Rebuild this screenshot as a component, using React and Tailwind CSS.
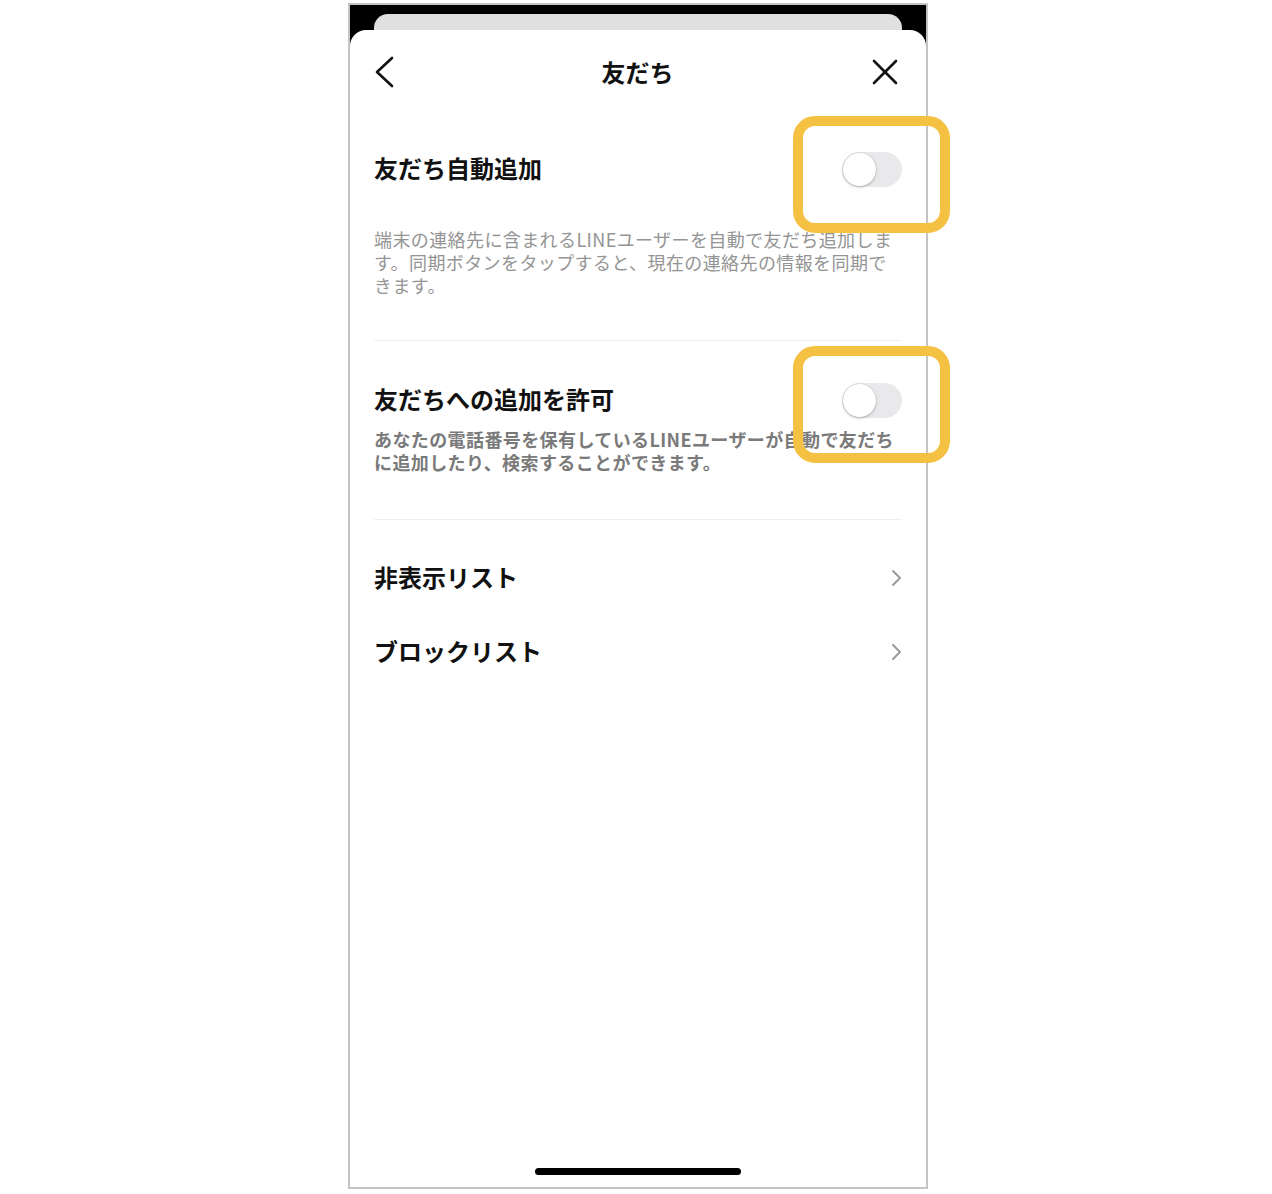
import React from "react";

function Toggle({ boxTop }) {
  return (
    <div className="relative w-[60px] h-[35px] shrink-0">
      <div className="w-[60px] h-[35px] rounded-full bg-[#e9e9eb] flex items-center pl-[1px]">
        <div className="w-[33px] h-[33px] rounded-full bg-white shadow-[0_1px_3px_rgba(0,0,0,0.25),0_0_0_0.5px_rgba(0,0,0,0.06)]" />
      </div>
      <div
        className={
          "absolute left-[-49px] w-[157px] h-[117px] rounded-[22px] border-[10px] border-[#f5c143] z-10 pointer-events-none " +
          (boxTop === 1 ? "top-[-36px]" : "top-[-37px]")
        }
      />
    </div>
  );
}

function Chevron() {
  return (
    <svg width="12" height="20" viewBox="0 0 12 20" className="shrink-0">
      <polyline points="3,3 10,10 3,17" fill="none" stroke="#9a9a9a" strokeWidth="2" strokeLinecap="round" strokeLinejoin="round" />
    </svg>
  );
}

export default function App() {
  return (
    <div className="w-[1272px] h-[1194px] bg-white pl-[348px] pt-[3px] font-['Noto_Sans_CJK_JP','Noto_Sans',sans-serif]">
      <div className="w-[580px] h-[1186px] border-2 border-[#c4c4c4] bg-black flex flex-col">
        <div className="h-[25px] shrink-0 pt-[9px] px-[24px]">
          <div className="h-[16px] rounded-t-[14px] bg-[#e0e0e0]" />
        </div>
        <div className="flex-1 bg-white rounded-t-[16px] flex flex-col">
          {/* header */}
          <div className="h-[84px] grid grid-cols-[1fr_auto_1fr] items-center pl-[24px] pr-[28px]">
            <div className="flex justify-start">
              <svg width="22" height="32" viewBox="0 0 22 32">
                <polyline points="18,2 3,16 18,30" fill="none" stroke="#111" strokeWidth="2.6" strokeLinecap="round" strokeLinejoin="round" />
              </svg>
            </div>
            <div className="text-[24px] font-bold text-[#111] leading-none ml-[3px]">友だち</div>
            <div className="flex justify-end">
              <svg width="26" height="26" viewBox="0 0 26 26">
                <line x1="2" y1="2" x2="24" y2="24" stroke="#111" strokeWidth="2.6" strokeLinecap="round" />
                <line x1="24" y1="2" x2="2" y2="24" stroke="#111" strokeWidth="2.6" strokeLinecap="round" />
              </svg>
            </div>
          </div>

          <div className="px-[24px] flex flex-col">
            {/* section 1 */}
            <div className="mt-[1px] h-[106px] flex items-center justify-between">
              <div className="text-[24px] font-bold text-[#111] leading-none">友だち自動追加</div>
              <div className="mt-[2px]">
                <Toggle boxTop={1} />
              </div>
            </div>
            <p className="mt-[7px] text-[18px] leading-[23px] tracking-[0.4px] text-[#949494]">
              端末の連絡先に含まれるLINEユーザーを自動で友だち追加します。同期ボタンをタップすると、現在の連絡先の情報を同期できます。
            </p>
            <div className="mt-[43px] h-px bg-[#efefef]" />

            {/* section 2 */}
            <div className="mt-[40px] h-[36px] flex items-center justify-between">
              <div className="text-[24px] font-bold text-[#111] leading-none">友だちへの追加を許可</div>
              <div className="mt-[2px]">
                <Toggle boxTop={2} />
              </div>
            </div>
            <p className="mt-[11px] text-[18px] leading-[23px] tracking-[0.4px] font-bold text-[#7a7a7a]">
              あなたの電話番号を保有しているLINEユーザーが自動で友だちに追加したり、検索することができます。
            </p>
            <div className="mt-[45px] h-px bg-[#efefef]" />

            {/* list */}
            <div className="mt-[20px] h-[74px] flex items-center justify-between">
              <div className="text-[24px] font-bold text-[#111] leading-none">非表示リスト</div>
              <div className="mt-[2px]"><Chevron /></div>
            </div>
            <div className="h-[74px] flex items-center justify-between">
              <div className="text-[24px] font-bold text-[#111] leading-none">ブロックリスト</div>
              <div className="mt-[2px]"><Chevron /></div>
            </div>
          </div>

          <div className="mt-auto mb-[12px] flex justify-center">
            <div className="w-[206px] h-[7px] rounded-full bg-black" />
          </div>
        </div>
      </div>
    </div>
  );
}
